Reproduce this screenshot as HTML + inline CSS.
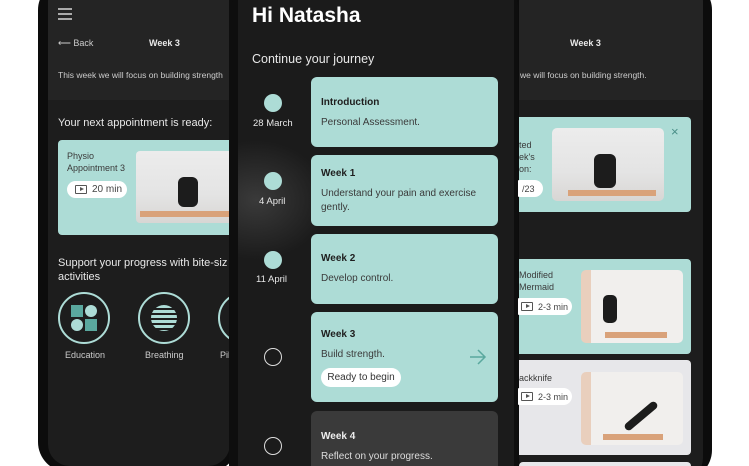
<!DOCTYPE html>
<html><head><meta charset="utf-8"><style>
*{margin:0;padding:0;box-sizing:border-box}
html,body{width:749px;height:466px;overflow:hidden}
body{background:#fff;font-family:"Liberation Sans",sans-serif}
#w{position:relative;width:749px;height:466px;overflow:hidden}
.a{position:absolute}
.t{color:#e8e8e8;white-space:nowrap}
.teal{background:#addcd6}
.pill{background:#fff;border-radius:11px;color:#444;font-size:10px;display:flex;align-items:center}
.vid{width:12px;height:9px;border:1px solid #555;border-radius:1px;margin-right:5px;position:relative}
.vid:after{content:"";position:absolute;left:4px;top:1px;border-left:4px solid #555;border-top:2.5px solid transparent;border-bottom:2.5px solid transparent}
.img{background:linear-gradient(180deg,#ececec 0%,#e4e4e4 60%,#d8d6d4 100%);border-radius:5px;overflow:hidden}
.mat{position:absolute;background:#d9a27a;height:6px}
.ct{color:#1e1e1e;font-size:10px;font-weight:bold}
.cs{color:#3a3a3a;font-size:10px;line-height:14px}
</style></head><body><div id="w">
<!-- left phone -->
<div class="a" style="left:38px;top:-20px;width:200px;height:492px;background:#0c0c0c;border-radius:30px"></div>
<div class="a" style="left:48px;top:-20px;width:182px;height:486px;background:#1d1d1d;border-radius:22px;overflow:hidden">
 <div class="a" style="left:0;top:0;width:182px;height:120px;background:#242424"></div>
</div>
<div class="a" style="left:58px;top:8px;width:14px;height:1.5px;background:#aaa;box-shadow:0 5px 0 #aaa,0 10px 0 #aaa"></div>
<div class="a t" style="left:58px;top:38px;font-size:9px;color:#ccc">⟵ Back</div>
<div class="a t" style="left:149px;top:38px;font-size:9px;font-weight:bold">Week 3</div>
<div class="a t" style="left:58px;top:70px;font-size:8.5px;color:#ccc;width:171px;overflow:hidden">This week we will focus on building strength</div>
<div class="a t" style="left:58px;top:117px;font-size:11px">Your next appointment is ready:</div>
<div class="a teal" style="left:58px;top:140px;width:172px;height:95px;border-radius:4px 0 0 4px"></div>
<div class="a cs" style="left:67px;top:150px;font-size:9px;line-height:12px">Physio<br>Appointment 3</div>
<div class="a pill" style="left:67px;top:181px;width:60px;height:17px;padding-left:8px"><span class="vid"></span>20 min</div>
<div class="a img" style="left:136px;top:151px;width:94px;height:72px;border-radius:4px 0 0 4px">
 <div class="mat" style="left:4px;top:60px;width:90px"></div>
 <div class="a" style="left:42px;top:26px;width:20px;height:30px;background:#1c1c1c;border-radius:6px"></div>
</div>
<div class="a t" style="left:58px;top:256px;font-size:11px;line-height:14px">Support your progress with bite-siz<br>activities</div>
<div class="a" style="left:58px;top:292px;width:52px;height:52px;border:2px solid #addcd6;border-radius:50%"></div>
<div class="a" style="left:71px;top:305px;width:12px;height:12px;background:#5aa89e"></div>
<div class="a" style="left:85px;top:305px;width:12px;height:12px;background:#addcd6;border-radius:50%"></div>
<div class="a" style="left:71px;top:319px;width:12px;height:12px;background:#addcd6;border-radius:50%"></div>
<div class="a" style="left:85px;top:319px;width:12px;height:12px;background:#5aa89e"></div>
<div class="a" style="left:138px;top:292px;width:52px;height:52px;border:2px solid #addcd6;border-radius:50%"></div>
<div class="a" style="left:151px;top:305px;width:26px;height:26px;border-radius:50%;background:repeating-linear-gradient(180deg,#addcd6 0 3px,#1d1d1d 3px 5px)"></div>
<div class="a" style="left:218px;top:292px;width:52px;height:52px;border:2px solid #addcd6;border-radius:50%"></div>
<div class="a t" style="left:65px;top:350px;font-size:9px;color:#ccc">Education</div>
<div class="a t" style="left:145px;top:350px;font-size:9px;color:#ccc">Breathing</div>
<div class="a t" style="left:220px;top:350px;font-size:9px;color:#ccc">Pil</div>
<div class="a" style="left:229px;top:0;width:8px;height:466px;background:#0e0e0e"></div>

<!-- right phone -->
<div class="a" style="left:512px;top:-20px;width:200px;height:500px;background:#0c0c0c;border-radius:30px"></div>
<div class="a" style="left:519px;top:-20px;width:184px;height:500px;background:#1d1d1d;border-radius:22px;overflow:hidden">
 <div class="a" style="left:0;top:0;width:184px;height:120px;background:#242424"></div>
</div>
<div class="a t" style="left:570px;top:38px;font-size:9px;font-weight:bold">Week 3</div>
<div class="a t" style="left:520px;top:70px;font-size:8.5px;color:#ccc">we will focus on building strength.</div>
<div class="a teal" style="left:519px;top:117px;width:172px;height:95px;border-radius:0 4px 4px 0"></div>
<div class="a cs" style="left:519px;top:139px;font-size:9px;line-height:12px">ted<br>ek's<br>on:</div>
<div class="a pill" style="left:512px;top:180px;width:31px;height:17px;padding-left:10px;font-size:9px">/23</div>
<div class="a img" style="left:552px;top:128px;width:112px;height:73px">
 <div class="mat" style="left:16px;top:62px;width:88px"></div>
 <div class="a" style="left:42px;top:26px;width:22px;height:34px;background:#1c1c1c;border-radius:6px"></div>
</div>
<div class="a" style="left:671px;top:124px;font-size:13px;color:#4a8f88">×</div>
<div class="a teal" style="left:519px;top:259px;width:172px;height:95px;border-radius:0 4px 4px 0"></div>
<div class="a cs" style="left:519px;top:269px;font-size:9px;line-height:12px">Modified<br>Mermaid</div>
<div class="a pill" style="left:512px;top:298px;width:60px;height:17px;padding-left:9px;font-size:9px"><span class="vid"></span>2-3 min</div>
<div class="a img" style="left:581px;top:270px;width:102px;height:73px;background:linear-gradient(90deg,#e9cfbd 0 10%,#f1efed 10%)">
 <div class="mat" style="left:24px;top:62px;width:62px"></div>
 <div class="a" style="left:22px;top:25px;width:14px;height:28px;background:#1c1c1c;border-radius:5px"></div>
</div>
<div class="a" style="left:519px;top:360px;width:172px;height:95px;background:#e7e7ea;border-radius:0 4px 4px 0"></div>
<div class="a cs" style="left:519px;top:371px;font-size:9px">ackknife</div>
<div class="a pill" style="left:512px;top:388px;width:60px;height:17px;padding-left:9px;font-size:9px"><span class="vid"></span>2-3 min</div>
<div class="a img" style="left:581px;top:372px;width:102px;height:73px;background:linear-gradient(90deg,#e9cfbd 0 10%,#f1efed 10%)">
 <div class="mat" style="left:22px;top:62px;width:60px"></div>
 <div class="a" style="left:40px;top:40px;width:40px;height:8px;background:#1c1c1c;border-radius:4px;transform:rotate(-40deg)"></div>
</div>
<div class="a" style="left:519px;top:462px;width:172px;height:4px;background:#e7e7ea;border-radius:4px 4px 0 0"></div>

<!-- center phone -->
<div class="a" style="left:232px;top:-20px;width:286px;height:520px;background:#0e0e0e;border-radius:26px"></div>
<div class="a" style="left:238px;top:-20px;width:276px;height:520px;background:#1b1b1b;border-radius:20px;overflow:hidden">
 <div class="a" style="left:0;top:160px;width:90px;height:120px;background:radial-gradient(ellipse at 20% 50%,#3a3a3a,transparent 70%)"></div>
</div>
<div class="a t" style="left:252px;top:4px;font-size:21px;font-weight:bold;color:#fff">Hi Natasha</div>
<div class="a t" style="left:252px;top:52px;font-size:12.5px">Continue your journey</div>

<div class="a" style="left:264px;top:94px;width:18px;height:18px;border-radius:50%;background:#addcd6"></div>
<div class="a t" style="left:253px;top:118px;font-size:9.5px">28 March</div>
<div class="a" style="left:264px;top:172px;width:18px;height:18px;border-radius:50%;background:#addcd6"></div>
<div class="a t" style="left:259px;top:196px;font-size:9.5px">4 April</div>
<div class="a" style="left:264px;top:251px;width:18px;height:18px;border-radius:50%;background:#addcd6"></div>
<div class="a t" style="left:256px;top:274px;font-size:9.5px">11 April</div>
<div class="a" style="left:264px;top:348px;width:18px;height:18px;border-radius:50%;border:1.5px solid #ddd"></div>
<div class="a" style="left:264px;top:437px;width:18px;height:18px;border-radius:50%;border:1.5px solid #ddd"></div>

<div class="a teal" style="left:311px;top:77px;width:187px;height:70px;border-radius:6px"></div>
<div class="a ct" style="left:321px;top:97px">Introduction</div>
<div class="a cs" style="left:321px;top:116px">Personal Assessment.</div>
<div class="a teal" style="left:311px;top:155px;width:187px;height:71px;border-radius:6px"></div>
<div class="a ct" style="left:321px;top:168px">Week 1</div>
<div class="a cs" style="left:321px;top:187px">Understand your pain and exercise<br>gently.</div>
<div class="a teal" style="left:311px;top:234px;width:187px;height:70px;border-radius:6px"></div>
<div class="a ct" style="left:321px;top:253px">Week 2</div>
<div class="a cs" style="left:321px;top:272px">Develop control.</div>
<div class="a teal" style="left:311px;top:312px;width:187px;height:90px;border-radius:6px"></div>
<div class="a ct" style="left:321px;top:329px">Week 3</div>
<div class="a cs" style="left:321px;top:348px">Build strength.</div>
<div class="a pill" style="left:321px;top:368px;width:80px;height:19px;justify-content:center;font-size:10px;color:#333">Ready to begin</div>
<svg class="a" style="left:468px;top:348px" width="20" height="18" viewBox="0 0 20 18"><path d="M2 9H17M10 2L17 9L10 16" stroke="#5aa89e" stroke-width="1.5" fill="none"/></svg>
<div class="a" style="left:311px;top:411px;width:187px;height:55px;background:#3a3a3a;border-radius:6px 6px 0 0"></div>
<div class="a ct" style="left:321px;top:431px;color:#eee">Week 4</div>
<div class="a cs" style="left:321px;top:450px;color:#ddd">Reflect on your progress.</div>
</div></body></html>
